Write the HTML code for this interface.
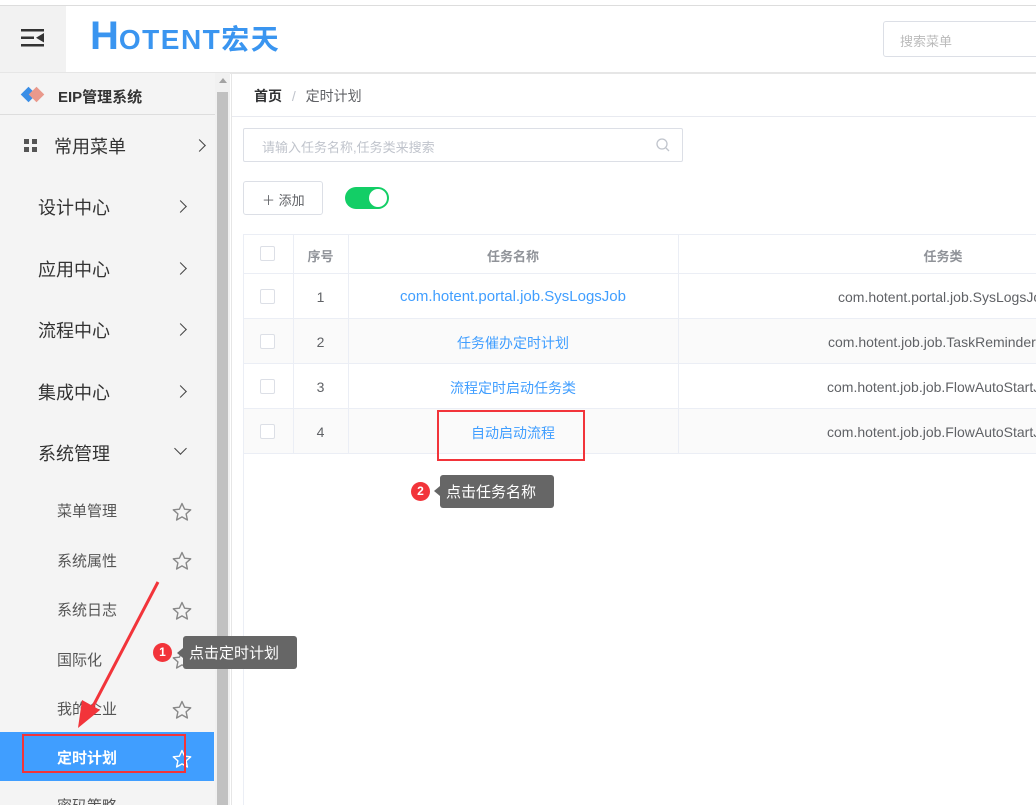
<!DOCTYPE html>
<html><head><meta charset="utf-8"><style>
*{margin:0;padding:0;box-sizing:border-box}
html,body{width:1036px;height:805px;overflow:hidden}
body{background:#fff;font-family:"Liberation Sans","Noto Sans CJK SC",sans-serif;position:relative}
.abs{position:absolute}
.side{left:0;top:73px;width:215px;height:732px;background:#f4f4f4}
.mi{position:absolute;left:38px;font-size:18px;color:#333}
.chev{position:absolute;left:176px;width:9px;height:9px;border-right:1.5px solid #444;border-top:1.5px solid #444;transform:rotate(45deg)}
.si{position:absolute;left:57px;font-size:15px;color:#555}
.star{position:absolute;left:172px}
.cell{position:absolute;font-size:14px;color:#606266;text-align:center}
.hl{position:absolute;left:243px;width:800px;height:1px;background:#ebeef5}
.cb{position:absolute;left:260px;width:15px;height:15px;border:1px solid #dcdfe6;border-radius:2px;background:#fff}
</style></head><body>
<svg width="0" height="0" style="position:absolute"><defs><symbol id="st" viewBox="0 0 20 20"><path d="M10 1.5 L12.6 7.2 L18.7 7.8 L14.1 11.9 L15.4 18 L10 14.9 L4.6 18 L5.9 11.9 L1.3 7.8 L7.4 7.2Z" fill="none" stroke="currentColor" stroke-width="1.4" stroke-linejoin="round"/></symbol></defs></svg>
<div class="abs" style="left:0;top:5px;width:1036px;height:1px;background:#ddd"></div>
<div class="abs" style="left:0;top:6px;width:66px;height:66px;background:#f2f2f2"></div>
<svg class="abs" style="left:21px;top:28px" width="24" height="20"><rect x="0" y="1" width="23" height="2.5" fill="#333"/><rect x="0" y="8.5" width="13" height="2.5" fill="#333"/><rect x="0" y="16" width="23" height="2.5" fill="#333"/><path d="M23 5 L15 9.75 L23 14.5Z" fill="#333"/></svg>
<div class="abs" style="left:90px;top:14px;font-size:40px;font-weight:bold;color:#3a95f0;white-space:nowrap;line-height:44px">H<span style="font-size:28px;letter-spacing:1.5px">OTENT宏天</span></div>
<div class="abs" style="left:883px;top:21px;width:160px;height:36px;border:1px solid #dcdfe6;border-radius:3px;font-size:13px;color:#bbb;padding:9px 16px">搜索菜单</div>
<div class="abs" style="left:0;top:72px;width:1036px;height:2px;background:#e6e6e6"></div>

<div class="abs side"></div>
<svg class="abs" style="left:20px;top:86px" width="26" height="18"><rect x="3" y="3" width="11" height="11" transform="rotate(45 8.5 8.5)" fill="#3a8ee6"/><rect x="11" y="3" width="11" height="11" transform="rotate(45 16.5 8.5)" fill="#e9998c"/></svg>
<div class="abs" style="left:58px;top:86px;font-size:15px;font-weight:bold;color:#333">EIP管理系统</div>
<div class="abs" style="left:0;top:114px;width:215px;height:1px;background:#ddd"></div>
<svg class="abs" style="left:24px;top:139px" width="13" height="13"><rect width="5" height="5" fill="#555"/><rect x="8" width="5" height="5" fill="#555"/><rect y="8" width="5" height="5" fill="#555"/><rect x="8" y="8" width="5" height="5" fill="#555"/></svg>
<div class="mi" style="left:54px;top:133px">常用菜单</div><div class="chev" style="left:195px;top:141px"></div>
<div class="mi" style="top:194px">设计中心</div><div class="chev" style="top:202px"></div>
<div class="mi" style="top:256px">应用中心</div><div class="chev" style="top:264px"></div>
<div class="mi" style="top:317px">流程中心</div><div class="chev" style="top:325px"></div>
<div class="mi" style="top:379px">集成中心</div><div class="chev" style="top:387px"></div>
<div class="mi" style="top:440px">系统管理</div><div class="chev" style="top:444px;transform:rotate(135deg)"></div>
<div class="si" style="top:500px">菜单管理</div><svg class="star" style="top:502px;color:#888" width="20" height="20"><use href="#st"/></svg>
<div class="si" style="top:550px">系统属性</div><svg class="star" style="top:551px;color:#888" width="20" height="20"><use href="#st"/></svg>
<div class="si" style="top:599px">系统日志</div><svg class="star" style="top:601px;color:#888" width="20" height="20"><use href="#st"/></svg>
<div class="si" style="top:649px">国际化</div><svg class="star" style="top:650px;color:#888" width="20" height="20"><use href="#st"/></svg>
<div class="si" style="top:698px">我的企业</div><svg class="star" style="top:700px;color:#888" width="20" height="20"><use href="#st"/></svg>
<div class="abs" style="left:0;top:732px;width:214px;height:49px;background:#409eff"></div>
<div class="si" style="top:747px;color:#fff;font-weight:bold">定时计划</div><svg class="star" style="top:749px;color:#fff" width="20" height="20"><use href="#st"/></svg>
<div class="si" style="top:795px">密码策略</div>
<div class="abs" style="left:22px;top:734px;width:164px;height:39px;border:2px solid #f2343a"></div>
<div class="abs" style="left:215px;top:73px;width:15px;height:732px;background:#f1f1f1"></div>
<div class="abs" style="left:217px;top:92px;width:11px;height:713px;background:#c1c1c1"></div>
<div class="abs" style="left:219px;top:78px;border:4px solid transparent;border-bottom:5px solid #a3a3a3;border-top:0"></div>
<div class="abs" style="left:231px;top:73px;width:1px;height:732px;background:#e6e6e6"></div>

<div class="abs" style="left:254px;top:86px;font-size:14px;color:#303133;font-weight:bold">首页 <span style="color:#c0c4cc;font-weight:normal;margin:0 6px">/</span> <span style="font-weight:normal;color:#606266">定时计划</span></div>
<div class="abs" style="left:232px;top:116px;width:804px;height:1px;background:#e8eaf0"></div>
<div class="abs" style="left:243px;top:128px;width:440px;height:34px;border:1px solid #dcdfe6;border-radius:2px;font-size:13px;color:#c0c4cc;padding:8px 18px">请输入任务名称,任务类来搜索</div>
<svg class="abs" style="left:656px;top:138px" width="14" height="14"><circle cx="6" cy="6" r="5" fill="none" stroke="#c0c4cc" stroke-width="1.3"/><path d="M10 10 L13 13" stroke="#c0c4cc" stroke-width="1.3"/></svg>
<div class="abs" style="left:243px;top:181px;width:80px;height:34px;border:1px solid #dcdfe6;border-radius:3px;font-size:13px;color:#606266;padding:8px 0 0 18px">＋ 添加</div>
<div class="abs" style="left:345px;top:187px;width:44px;height:22px;border-radius:11px;background:#13ce66"></div>
<div class="abs" style="left:369px;top:189px;width:18px;height:18px;border-radius:50%;background:#fff"></div>

<div class="abs" style="left:243px;top:234px;width:800px;height:571px;border-left:1px solid #ebeef5"></div>
<div class="abs" style="left:244px;top:318px;width:800px;height:45px;background:#fafafa"></div>
<div class="abs" style="left:244px;top:408px;width:800px;height:45px;background:#fafafa"></div>
<div class="hl" style="top:234px"></div><div class="hl" style="top:273px"></div><div class="hl" style="top:318px"></div><div class="hl" style="top:363px"></div><div class="hl" style="top:408px"></div><div class="hl" style="top:453px"></div>
<div class="abs" style="left:293px;top:234px;width:1px;height:219px;background:#ebeef5"></div>
<div class="abs" style="left:348px;top:234px;width:1px;height:219px;background:#ebeef5"></div>
<div class="abs" style="left:678px;top:234px;width:1px;height:219px;background:#ebeef5"></div>
<div class="cb" style="top:246px"></div><div class="cb" style="top:289px"></div><div class="cb" style="top:334px"></div><div class="cb" style="top:379px"></div><div class="cb" style="top:424px"></div>
<div class="cell" style="left:293px;width:55px;top:246px;font-size:13px;font-weight:bold;color:#909399">序号</div>
<div class="cell" style="left:348px;width:330px;top:246px;font-size:13px;font-weight:bold;color:#909399">任务名称</div>
<div class="cell" style="left:678px;width:530px;top:246px;font-size:13px;font-weight:bold;color:#909399">任务类</div>
<div class="cell" style="left:293px;width:55px;top:289px">1</div>
<div class="cell" style="left:293px;width:55px;top:334px">2</div>
<div class="cell" style="left:293px;width:55px;top:379px">3</div>
<div class="cell" style="left:293px;width:55px;top:424px">4</div>
<div class="cell" style="left:348px;width:330px;top:288px;color:#409eff;font-size:15px">com.hotent.portal.job.SysLogsJob</div>
<div class="cell" style="left:348px;width:330px;top:333px;color:#409eff">任务催办定时计划</div>
<div class="cell" style="left:348px;width:330px;top:378px;color:#409eff">流程定时启动任务类</div>
<div class="cell" style="left:348px;width:330px;top:423px;color:#409eff">自动启动流程</div>
<div class="cell" style="left:838px;top:289px;text-align:left;white-space:nowrap">com.hotent.portal.job.SysLogsJob</div>
<div class="cell" style="left:828px;top:334px;text-align:left;white-space:nowrap">com.hotent.job.job.TaskReminderJob</div>
<div class="cell" style="left:827px;top:379px;text-align:left;white-space:nowrap">com.hotent.job.job.FlowAutoStartJob</div>
<div class="cell" style="left:827px;top:424px;text-align:left;white-space:nowrap">com.hotent.job.job.FlowAutoStartJob</div>
<div class="abs" style="left:437px;top:410px;width:148px;height:51px;border:2px solid #f2343a"></div>

<div class="abs" style="left:411px;top:482px;width:19px;height:19px;border-radius:50%;background:#f2343a;color:#fff;font-size:12px;font-weight:bold;text-align:center;line-height:19px">2</div>
<div class="abs" style="left:434px;top:486px;border:5px solid transparent;border-right:6px solid #666;border-left:0"></div>
<div class="abs" style="left:440px;top:475px;width:114px;height:33px;background:#666;border-radius:3px;color:#fff;font-size:15px;padding:6px 6px">点击任务名称</div>

<svg class="abs" style="left:0;top:0" width="240" height="805"><path d="M158 582 L90 712" stroke="#f2343a" stroke-width="3"/><path d="M78 728 L82 700 L100 710Z" fill="#f2343a"/></svg>
<div class="abs" style="left:153px;top:643px;width:19px;height:19px;border-radius:50%;background:#f2343a;color:#fff;font-size:12px;font-weight:bold;text-align:center;line-height:19px">1</div>
<div class="abs" style="left:177px;top:648px;border:5px solid transparent;border-right:6px solid #666;border-left:0"></div>
<div class="abs" style="left:183px;top:636px;width:114px;height:33px;background:#666;border-radius:3px;color:#fff;font-size:15px;padding:6px 6px">点击定时计划</div>
</body></html>
